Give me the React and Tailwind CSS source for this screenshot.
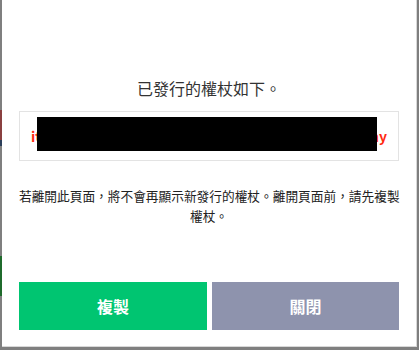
export default function App() {
  return (
    <div
      className="w-[419px] h-[350px] bg-[#7f7f7f] flex overflow-hidden"
      style={{ fontFamily: '"Noto Sans CJK TC", "Noto Sans", sans-serif' }}
    >
      <div className="w-[2px] flex flex-col shrink-0">
        <div className="h-[110px]" />
        <div className="h-[30px] bg-[#8a4040]" />
        <div className="h-[6px] bg-[#2c3e5a]" />
        <div className="h-[110px]" />
        <div className="h-[40px] bg-[#1f6b2c]" />
      </div>
      <div className="flex flex-col w-[415px] h-[347px]">
        <div className="flex-1 bg-white border-r border-b border-[#d8d8d8] flex flex-col px-[17px] pt-[76px]">
          <div className="text-[16px] leading-[24px] text-[#333] text-center">已發行的權杖如下。</div>
          <div className="mt-[11px] h-[50px] border border-[#e3e3e3] relative flex items-center justify-between px-[11px] text-[14px] font-bold text-[#ff2a10]">
            <span>it</span>
            <span>ny</span>
            <div className="absolute left-[17px] top-[5px] w-[340px] h-[34px] bg-black" />
          </div>
          <div className="mt-[25px] text-[12.7px] leading-[20px] text-[#222] text-center whitespace-nowrap">
            若離開此頁面，將不會再顯示新發行的權杖。離開頁面前，請先複製
            <br />
            權杖。
          </div>
          <div className="mt-[56px] flex gap-[5px]">
            <button className="w-[188px] h-[48px] bg-[#00c571] text-white text-[16px] font-bold">複製</button>
            <button className="flex-1 h-[48px] bg-[#8e93ad] text-white text-[16px] font-bold">關閉</button>
          </div>
        </div>
      </div>
    </div>
  );
}
